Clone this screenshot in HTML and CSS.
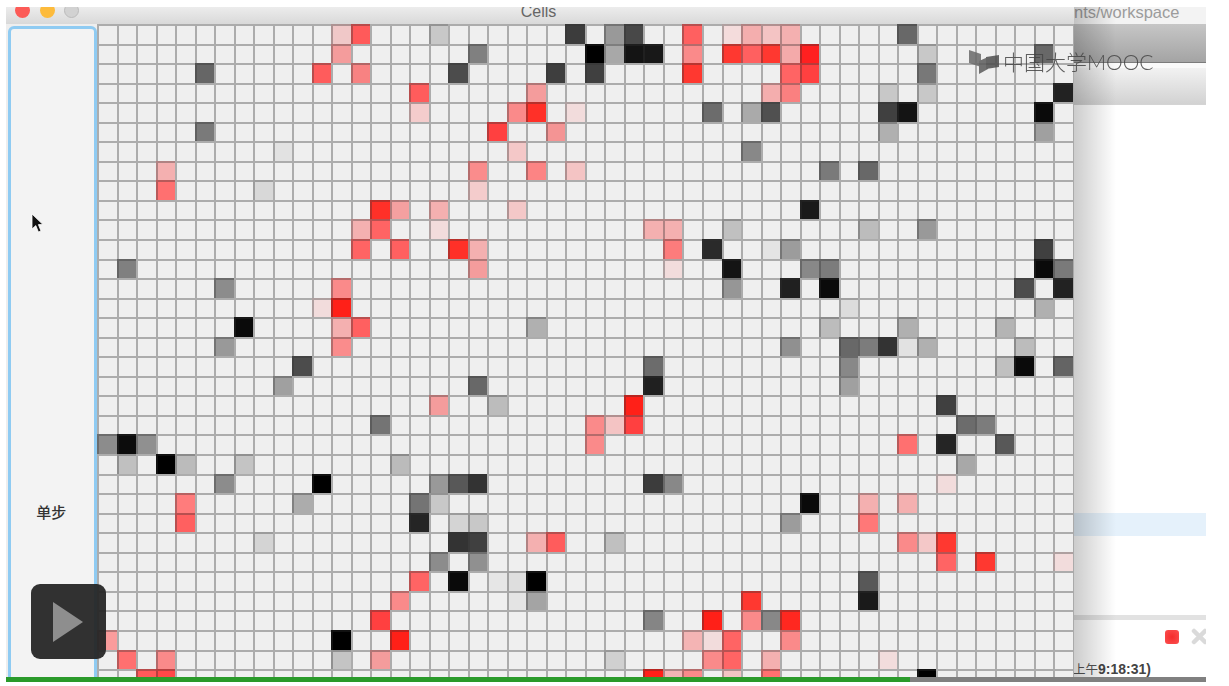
FILE: index.html
```html
<!DOCTYPE html>
<html lang="zh-CN">
<head>
  <meta charset="UTF-8">
  <meta name="viewport" content="width=device-width, initial-scale=1.0">
  <title>Cells</title>
  <link rel="stylesheet" href="styles.css">
</head>
<body>
  <div class="stage">
    <section class="cells-window">
      <header class="titlebar">
        <div class="lights">
          <span class="light light-close"></span>
          <span class="light light-min"></span>
          <span class="light light-zoom"></span>
        </div>
        <span class="title">Cells</span>
      </header>
      <div class="cells-body">
        <div class="side">
          <button class="step-btn" type="button">单步</button>
        </div>
        <div id="grid" class="grid"></div>
      </div>
    </section>

    <section class="workspace">
      <div class="pathbar">nts/workspace</div>
      <div class="toolbar-dark"></div>
      <div class="toolbar-light"></div>
      <div class="tree">
        <div class="tree-selected"></div>
      </div>
      <div class="divider"></div>
      <div class="console">
        <div class="console-tools">
          <span class="stop-icon"></span>
          <svg class="close-icon" width="17" height="17" viewBox="0 0 17 17">
            <path d="M3 3 L14 14 M14 3 L3 14" stroke="#dadada" stroke-width="4.5" stroke-linecap="round"/>
          </svg>
        </div>
        <div class="console-msg">上午<b>9:18:31)</b></div>
      </div>
    </section>

    <!-- cursor, logo and player controls sit on top of the video -->
    <svg class="cursor" width="14" height="21" viewBox="0 0 14 21">
      <path d="M1 1 L1 16 L4.8 12.6 L7.4 19 L10 18 L7.4 11.6 L12 11.6 Z" fill="#111" stroke="#fff" stroke-width="0.8"/>
    </svg>

    <div class="logo">
      <svg width="31" height="25" viewBox="0 0 31 25">
        <polygon points="0,0 12,4 12,17 0,13" fill="#6a6a6a"/>
        <polygon points="10,11 19,7 19,19 10,24" fill="#5c5c5c"/>
        <polygon points="17,7 30,5 30,17 17,19" fill="#4e4e4e"/>
      </svg>
      <span class="logo-text">中国大学MOOC</span>
    </div>

    <div class="play">
      <svg width="32" height="42" viewBox="0 0 32 42">
        <polygon points="1,1 31,21 1,41" fill="#8e8e8e"/>
      </svg>
    </div>

    <div class="progress">
      <div class="progress-done"></div>
    </div>
  </div>
  <script src="grid.js"></script>
</body>
</html>
```

FILE: styles.css
```css
body {
  margin: 0;
  background-color: #fff;
  font-family: 'Liberation Sans', Arial, sans-serif;
}

.stage {
  position: relative;
  display: flex;
  width: 1200px;
  height: 675px;
  margin: 7px 0 0 6px;
  overflow: hidden;
}

/* Cells window */
.cells-window {
  display: flex;
  flex-direction: column;
  width: 1068px;
  flex-shrink: 0;
  background-color: #eee;
}

.titlebar {
  display: grid;
  grid-template-columns: 1fr auto 1fr;
  height: 17px;
  flex-shrink: 0;
  overflow: hidden;
  background: linear-gradient(#ececec, #d9d9d9);
}

.lights {
  display: flex;
  gap: 9.5px;
  margin: -4px 0 0 9px;
}

.light {
  width: 15px;
  height: 15px;
  border-radius: 50%;
}

.light-close { background-color: #fc5b57; }
.light-min { background-color: #fdbb3c; }
.light-zoom { background-color: #d2d2d2; border: 1px solid #bbb; box-sizing: border-box; }

.title {
  margin: -5px 3px 0 0;
  font-size: 16px;
  line-height: 20px;
  color: #666;
}

.cells-body {
  display: flex;
  flex: 1;
  min-height: 0;
}

.side {
  width: 91px;
  flex-shrink: 0;
  padding: 2px 0 0 2px;
  box-sizing: border-box;
}

.step-btn {
  display: block;
  width: 88.5px;
  height: 972px;
  padding: 0 2px 2px 0;
  border: 3px solid #8fcbf2;
  border-radius: 6px;
  background-color: #f3f3f3;
  font-family: 'Noto Sans CJK SC', sans-serif;
  font-size: 15px;
  font-weight: 500;
  color: #333;
}

.grid {
  display: grid;
  grid-template-columns: repeat(50, 19.53px);
  grid-auto-rows: 19.55px;
  align-content: start;
  box-shadow: 1px 0 #aaa;
  filter: blur(0.6px);
}

.cell {
  border: solid rgba(50, 50, 50, 0.35);
  border-width: 2px 0 0 2px;
  background-color: #efefef;
  box-sizing: border-box;
}

/* Eclipse behind it */
.workspace {
  position: relative;
  display: flex;
  flex-direction: column;
  flex: 1;
  overflow: hidden;
  background-color: #fff;
}

.workspace::before {
  content: "";
  position: absolute;
  top: 0;
  bottom: 0;
  left: 0;
  width: 42px;
  background: linear-gradient(to right, rgba(0, 0, 0, 0.2), rgba(0, 0, 0, 0));
}

.pathbar {
  height: 17px;
  flex-shrink: 0;
  overflow: hidden;
  background-color: #f3f3f3;
  font-size: 16.5px;
  line-height: 11px;
  color: #9c9c9c;
}

.toolbar-dark {
  height: 38px;
  flex-shrink: 0;
  border-bottom: 1px solid #7c7c7c;
  background: linear-gradient(#c6c6c6, #a4a4a4);
}

.toolbar-light {
  height: 36px;
  flex-shrink: 0;
  border-top: 5px solid #fafafa;
  border-bottom: 1px solid #d4d4d4;
  background: linear-gradient(#f2f2f2, #d2d2d2);
}

.tree {
  flex: 1;
  padding-top: 408px;
}

.tree-selected {
  height: 23px;
  background-color: #e5f1fb;
}

.divider {
  height: 5px;
  flex-shrink: 0;
  background-color: #e2e2e2;
}

.console {
  display: flex;
  flex-direction: column;
  justify-content: space-between;
  height: 62px;
  flex-shrink: 0;
  padding-bottom: 4px;
  box-sizing: border-box;
}

.console-tools {
  display: flex;
  align-items: center;
  justify-content: flex-end;
  gap: 12px;
  margin: 8px -2px 0 0;
}

.stop-icon {
  width: 14px;
  height: 14px;
  border-radius: 3px;
  background: radial-gradient(#f52c2c, #fb5050);
}

.console-msg {
  margin-left: -1px;
  font-family: 'Liberation Sans', 'Noto Sans CJK SC', sans-serif;
  font-size: 12.5px;
  line-height: 16px;
  color: #555;
  white-space: nowrap;
}

.console-msg b {
  font-size: 14px;
  color: #444;
}

/* Overlays */
.cursor {
  position: absolute;
  top: 206px;
  left: 25px;
}

.logo {
  position: absolute;
  top: 43px;
  left: 963px;
  display: flex;
  align-items: center;
  gap: 3px;
  opacity: 0.85;
}

.logo-text {
  margin: -3px 0 0 0;
  font-family: 'Lato', 'Noto Sans CJK SC', sans-serif;
  font-weight: 300;
  font-size: 21px;
  line-height: 25px;
  color: #444;
}

.play {
  position: absolute;
  top: 577px;
  left: 25px;
  display: flex;
  align-items: center;
  justify-content: center;
  width: 75px;
  height: 75px;
  padding-right: 2px;
  box-sizing: border-box;
  border-radius: 9px;
  background-color: rgba(38, 38, 38, 0.95);
}

.progress {
  position: absolute;
  right: 0;
  bottom: 0;
  left: 0;
  height: 5px;
  background-color: #808080;
}

.progress-done {
  width: 904px;
  height: 100%;
  background-color: #2a9a2a;
}
```

FILE: grid.js
```js
// colours of the live cells, by row then by column
const CELLS = {
  0: {12: '#f0c8c8', 13: '#ff5a5a', 17: '#c8c8c8', 24: '#3c3c3c', 26: '#999', 27: '#484848', 30: '#ff6060', 32: '#f4dcdc', 33: '#f4aeae', 34: '#f4c4c4', 35: '#f4b0b0', 41: '#686868'},
  1: {12: '#f49c9c', 19: '#808080', 25: '#000', 26: '#a8a8a8', 27: '#141414', 28: '#181818', 30: '#fa8a8a', 32: '#ff3830', 33: '#ff6060', 34: '#ff3830', 35: '#f4aaaa', 36: '#ff2020', 42: '#c8c8c8', 48: '#686868'},
  2: {5: '#666', 11: '#ff5c5c', 13: '#f88282', 18: '#4c4c4c', 23: '#3e3e3e', 25: '#404040', 30: '#ff3830', 35: '#ff6464', 36: '#ff4040', 42: '#787878'},
  3: {16: '#ff5c5c', 22: '#f49c9c', 34: '#f4aeae', 35: '#fa8080', 40: '#c8c8c8', 42: '#c8c8c8', 49: '#222'},
  4: {16: '#f4cccc', 21: '#fa8a8a', 22: '#ff3028', 24: '#f2dcdc', 31: '#6c6c6c', 33: '#aaa', 34: '#505050', 40: '#404040', 41: '#141414', 48: '#0a0a0a'},
  5: {5: '#7a7a7a', 20: '#ff4040', 23: '#f49494', 40: '#b0b0b0', 48: '#a0a0a0'},
  6: {9: '#e2e2e2', 21: '#f4c8c8', 33: '#888'},
  7: {3: '#f4b0b0', 19: '#fa8c8c', 22: '#fc8484', 24: '#f4c4c4', 37: '#7a7a7a', 39: '#686868'},
  8: {3: '#ff7070', 8: '#d8d8d8', 19: '#f4cccc'},
  9: {14: '#ff3028', 15: '#f4a0a0', 17: '#f4b0b0', 21: '#f4c8c8', 36: '#1a1a1a'},
  10: {13: '#f4b0b0', 14: '#ff6464', 17: '#f2dcdc', 28: '#f4b0b0', 29: '#f4b0b0', 32: '#c0c0c0', 39: '#bcbcbc', 42: '#999'},
  11: {13: '#ff6464', 15: '#ff6060', 18: '#ff3028', 19: '#f4b0b0', 29: '#fc7c7c', 31: '#2a2a2a', 34: '#e4e4e4', 35: '#9c9c9c', 48: '#404040'},
  12: {1: '#808080', 19: '#f49c9c', 29: '#f2dcdc', 32: '#141414', 36: '#888', 37: '#7c7c7c', 48: '#0a0a0a', 49: '#7a7a7a'},
  13: {6: '#8c8c8c', 12: '#fa8a8a', 32: '#969696', 35: '#202020', 37: '#0a0a0a', 47: '#4c4c4c', 49: '#222'},
  14: {11: '#f2dcdc', 12: '#ff2018', 38: '#dcdcdc', 48: '#b0b0b0'},
  15: {7: '#0a0a0a', 12: '#f4b0b0', 13: '#ff6060', 22: '#b0b0b0', 37: '#bcbcbc', 41: '#b0b0b0', 46: '#b4b4b4'},
  16: {6: '#999', 12: '#fa8c8c', 35: '#909090', 38: '#686868', 39: '#7c7c7c', 40: '#333', 41: '#e2e2e2', 42: '#b0b0b0', 47: '#bcbcbc'},
  17: {10: '#4c4c4c', 28: '#6c6c6c', 38: '#888', 46: '#c0c0c0', 47: '#0a0a0a', 49: '#646464'},
  18: {9: '#a0a0a0', 19: '#686868', 28: '#202020', 38: '#a0a0a0'},
  19: {17: '#f49c9c', 20: '#bcbcbc', 27: '#ff2018', 43: '#404040'},
  20: {14: '#747474', 25: '#fa8a8a', 26: '#f4c4c4', 27: '#ff4040', 44: '#6c6c6c', 45: '#7c7c7c'},
  21: {0: '#8c8c8c', 1: '#0c0c0c', 2: '#909090', 25: '#fa8a8a', 41: '#ff7070', 43: '#252525', 46: '#585858'},
  22: {1: '#c0c0c0', 3: '#000', 4: '#bbb', 7: '#c4c4c4', 15: '#bbb', 44: '#a8a8a8'},
  23: {6: '#8c8c8c', 11: '#000', 17: '#999', 18: '#585858', 19: '#333', 28: '#3c3c3c', 29: '#888', 43: '#f2dcdc'},
  24: {4: '#ff7c7c', 10: '#acacac', 16: '#747474', 17: '#c8c8c8', 36: '#0a0a0a', 39: '#f4b0b0', 41: '#f4b0b0'},
  25: {4: '#ff6060', 16: '#252525', 18: '#d4d4d4', 19: '#c8c8c8', 35: '#9c9c9c', 39: '#ff7878'},
  26: {8: '#d4d4d4', 18: '#333', 19: '#404040', 22: '#f4b0b0', 23: '#ff5c5c', 26: '#c0c0c0', 41: '#fa8a8a', 42: '#f4c8c8', 43: '#ff3830'},
  27: {17: '#8c8c8c', 19: '#909090', 43: '#ff6464', 45: '#ff3830', 49: '#f2dcdc'},
  28: {16: '#ff6464', 18: '#0a0a0a', 20: '#e6e6e6', 21: '#dedede', 22: '#000', 39: '#585858'},
  29: {15: '#fa8a8a', 21: '#e4e4e4', 22: '#a4a4a4', 33: '#ff3830', 39: '#1a1a1a'},
  30: {14: '#ff4040', 28: '#858585', 31: '#ff2018', 33: '#fa8a8a', 34: '#888', 35: '#ff2820'},
  31: {0: '#fa9c9c', 12: '#000', 15: '#ff2018', 30: '#f4b4b4', 31: '#f2dcdc', 32: '#ff6464', 35: '#fa8a8a'},
  32: {1: '#ff7070', 3: '#fa8a8a', 12: '#c4c4c4', 14: '#f49c9c', 26: '#d0d0d0', 31: '#fa8a8a', 32: '#ff6464', 34: '#f4b0b0', 40: '#f2dcdc'},
  33: {2: '#ff5a5a', 3: '#ff4848', 28: '#ff2018', 29: '#f4b4b4', 30: '#fa8a8a', 32: '#f4c4c4', 34: '#ff7070', 42: '#000'},
};

const grid = document.getElementById('grid');

for (let row = 0; row < 34; row++) {
  for (let col = 0; col < 50; col++) {
    const cell = document.createElement('div');
    cell.className = 'cell';
    const color = CELLS[row][col];
    if (color) cell.style.backgroundColor = color;
    grid.appendChild(cell);
  }
}
```
